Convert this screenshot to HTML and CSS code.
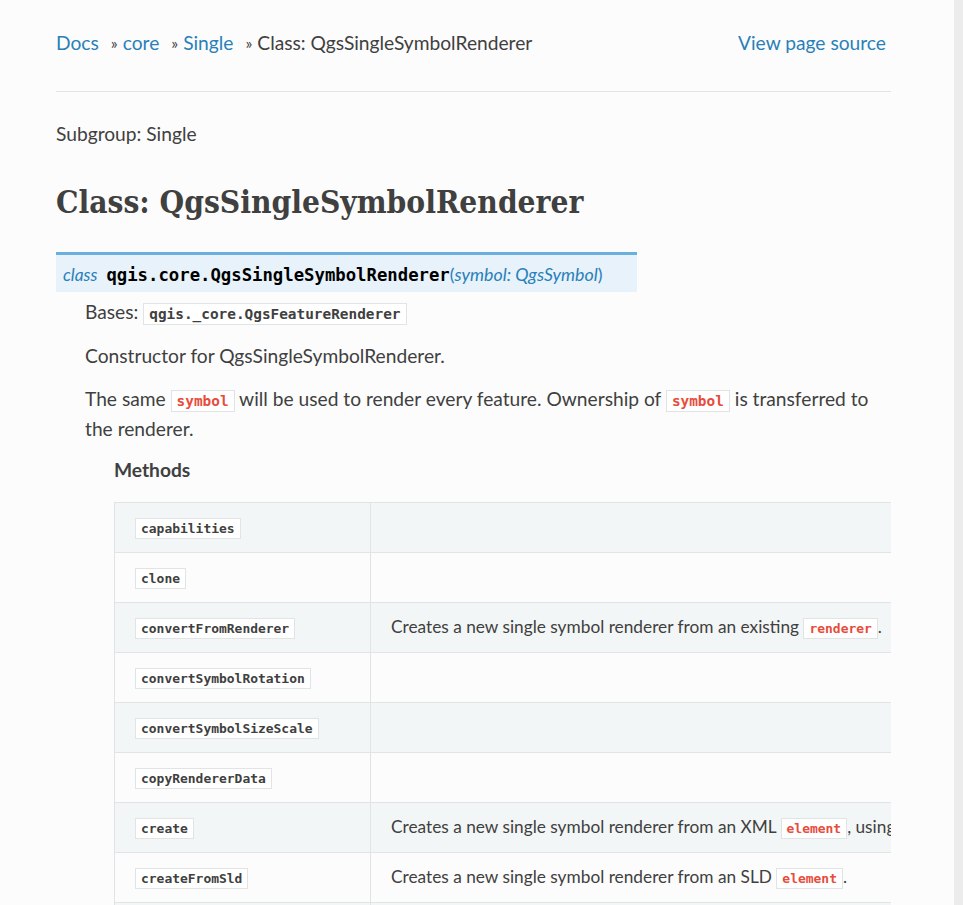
FILE: index.html
```html
<!DOCTYPE html>
<html lang="en">
<head>
<meta charset="utf-8">
<title>Class: QgsSingleSymbolRenderer</title>
<link rel="stylesheet" href="styles.css">
</head>
<body>
<div class="page">
  <div class="main">
    <nav class="crumbs">
      <ul class="crumb-list">
        <li><a href="#">Docs</a><span class="sep">»</span></li>
        <li><a href="#">core</a><span class="sep">»</span></li>
        <li><a href="#">Single</a><span class="sep">»</span></li>
        <li class="current">Class: QgsSingleSymbolRenderer</li>
      </ul>
      <a class="source" href="#">View page source</a>
    </nav>
    <div class="rule"></div>
    <p class="subgroup">Subgroup: Single</p>
    <h1 class="title">Class: QgsSingleSymbolRenderer</h1>
    <dl class="cls">
      <dt class="sig"><em class="kw">class</em><span class="sig-name">qgis.core.QgsSingleSymbolRenderer</span><span class="paren">(</span><em class="param">symbol: QgsSymbol</em><span class="paren">)</span></dt>
      <dd class="cls-body">
        <p class="para">Bases: <code class="xref">qgis._core.QgsFeatureRenderer</code></p>
        <p class="para">Constructor for QgsSingleSymbolRenderer.</p>
        <p class="para para-last">The same <code class="lit">symbol</code> will be used to render every feature. Ownership of <code class="lit">symbol</code> is transferred to the renderer.</p>
        <div class="methods">
          <p class="methods-title">Methods</p>
          <div class="table-wrap">
            <table class="mtable">
              <tbody>
                <tr class="odd"><td class="c1"><code class="xref tcode">capabilities</code></td><td class="c2"></td></tr>
                <tr><td class="c1"><code class="xref tcode">clone</code></td><td class="c2"></td></tr>
                <tr class="odd"><td class="c1"><code class="xref tcode">convertFromRenderer</code></td><td class="c2">Creates a new single symbol renderer from an existing <code class="lit tlit">renderer</code>.</td></tr>
                <tr><td class="c1"><code class="xref tcode">convertSymbolRotation</code></td><td class="c2"></td></tr>
                <tr class="odd"><td class="c1"><code class="xref tcode">convertSymbolSizeScale</code></td><td class="c2"></td></tr>
                <tr><td class="c1"><code class="xref tcode">copyRendererData</code></td><td class="c2"></td></tr>
                <tr class="odd"><td class="c1"><code class="xref tcode">create</code></td><td class="c2">Creates a new single symbol renderer from an XML <code class="lit tlit">element</code>, using the supplied read/write <code class="lit tlit">context</code>.</td></tr>
                <tr><td class="c1"><code class="xref tcode">createFromSld</code></td><td class="c2">Creates a new single symbol renderer from an SLD <code class="lit tlit">element</code>.</td></tr>
                <tr class="odd"><td class="c1"><code class="xref tcode">createLegendNodes</code></td><td class="c2"></td></tr>
              </tbody>
            </table>
          </div>
        </div>
      </dd>
    </dl>
  </div>
</div>
</body>
</html>
```

FILE: styles.css
```css
html, body {
  margin: 0;
  padding: 0;
}
body {
  background: #ececec;
  font-family: Lato, "Open Sans", "Liberation Sans", sans-serif;
  color: #404040;
  font-size: 19.2px;
  overflow: hidden;
}
.page {
  width: 954px;
  height: 905px;
  background: #fcfcfc;
  overflow: hidden;
}
.main {
  width: 835px;
  padding-left: 56px;
  padding-top: 30px;
}
a {
  color: #2980b9;
  text-decoration: none;
}
.crumbs {
  display: flex;
  justify-content: space-between;
  align-items: center;
  line-height: 26px;
  height: 26px;
}
.crumb-list {
  list-style: none;
  margin: 0;
  padding: 0;
  display: flex;
}
.crumb-list li {
  display: flex;
}
.sep {
  margin-left: 12px;
  margin-right: 5px;
  font-size: 16px;
}
.source {
  margin-right: 5px;
}
.rule {
  height: 1px;
  background: #e1e4e5;
  margin-top: 35px;
}
.subgroup {
  margin: 29px 0 0;
  line-height: 26px;
}
.title {
  font-family: "DejaVu Serif", serif;
  font-stretch: condensed;
  font-weight: bold;
  font-size: 31.4px;
  line-height: 40px;
  margin: 35px 0 0;
  color: #404040;
}
.cls {
  margin: 30px 0 0;
}
.sig {
  display: inline-block;
  box-sizing: border-box;
  height: 40px;
  background: #e7f2fa;
  border-top: 3px solid #6ab0de;
  padding: 4px 35px 0 7px;
  line-height: 29px;
  color: #000;
}
.kw {
  color: #2980b9;
  font-size: 17.3px;
  margin-right: 9px;
}
.sig-name {
  font-family: "DejaVu Sans Mono", monospace;
  font-weight: bold;
  font-size: 17.3px;
}
.paren {
  color: #2980b9;
  font-size: 17.8px;
}
.param {
  color: #2980b9;
  font-size: 17.8px;
}
.cls-body {
  margin: 0 0 0 29px;
}
.para {
  margin: 0 0 15px;
  line-height: 28px;
}
.para:first-child {
  margin-top: 6px;
  margin-bottom: 14px;
}
.para-last {
  margin-bottom: 13px;
}
code {
  font-family: "DejaVu Sans Mono", monospace;
  font-weight: bold;
  background: #fff;
  border: 1px solid #e1e4e5;
  padding: 2px 5px;
  white-space: nowrap;
}
.xref {
  color: #404040;
  font-size: 14.4px;
}
.lit {
  color: #e74c3c;
  font-size: 14.4px;
}
.methods {
  margin-left: 29px;
}
.methods-title {
  font-weight: bold;
  margin: 0 0 18px;
  line-height: 28px;
}
.table-wrap {
  width: 777px;
  overflow: hidden;
}
.mtable {
  border-collapse: collapse;
  border: 1px solid #e1e4e5;
  font-size: 17.28px;
}
.mtable td {
  border: 1px solid #e1e4e5;
  height: 50px;
  padding: 0 20px;
  white-space: nowrap;
  box-sizing: border-box;
  line-height: 24px;
}
.mtable tr {
  background: #fcfcfc;
}
.mtable tr.odd {
  background: #f3f6f6;
}
.c1 {
  width: 256px;
  min-width: 256px;
}
.tcode {
  font-size: 12.96px;
}
.tlit {
  font-size: 12.96px;
}
```
